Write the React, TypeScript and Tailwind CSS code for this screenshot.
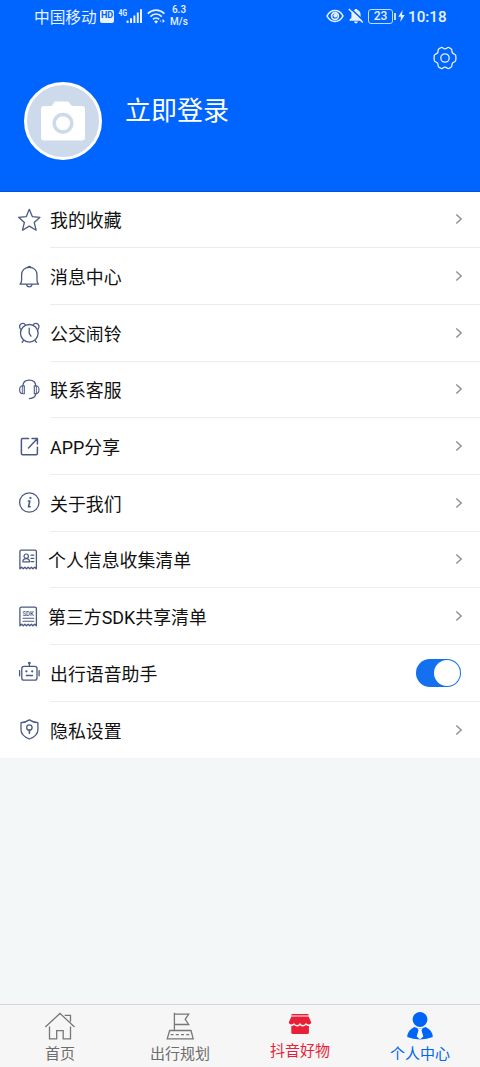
import type { ReactNode } from 'react';
import { useState } from 'react';

const INK = '#4a5a80';

interface IconProps {
  children: ReactNode;
}

function RowIcon({ children }: IconProps) {
  return (
    <svg
      width={24}
      height={24}
      viewBox="0 0 24 24"
      fill="none"
      stroke={INK}
      strokeWidth={1.3}
      strokeLinecap="round"
      strokeLinejoin="round"
      className="shrink-0"
    >
      {children}
    </svg>
  );
}

// Receipt outline with a torn bottom edge, shared by the two list entries.
const RECEIPT =
  'M2.9 20.8V3.6Q2.9 2.2 4.3 2.2H18Q19.4 2.2 19.4 3.6V20.8L17.7 19.2L15.9 20.8L14.4 19.2L12.8 20.8L11.2 19.2L9.5 20.8L7.9 19.2L6.2 20.8L4.6 19.2Z';

interface Row {
  label: string;
  icon: ReactNode;
  narrow?: boolean;
  toggle?: boolean;
}

const ROWS: Row[] = [
  {
    label: '我的收藏',
    icon: (
      <path d="M12.3 1.3L15.3 8.6L23 9.3L17.2 14.4L19.1 22.2L12.3 18.1L5.5 22.2L7.4 14.4L1.6 9.3L9.3 8.6Z" />
    ),
  },
  {
    label: '消息中心',
    icon: (
      <>
        <path d="M3 19.2C4.4 18.3 4.6 17 4.6 15V9.9C4.6 5.3 7.8 2.3 12.3 2.3S20 5.3 20 9.9V15C20 17 20.2 18.3 21.6 19.2Z" />
        <path d="M10.8 2.2Q12.3 .6 13.8 2.2M9.6 19.7Q10.2 21.8 12.3 21.8T15 19.7" />
      </>
    ),
  },
  {
    label: '公交闹铃',
    icon: (
      <>
        <circle cx={12.3} cy={12.3} r={8.8} />
        <path d="M12.2 7.2V12.4L14 15.2M3.4 8C1.8 6.2 2.5 2.5 5.6 2.3C7.2 2.2 8 3 8.4 4.1M21.2 8C22.8 6.2 22.1 2.5 19 2.3C17.4 2.2 16.6 3 16.2 4.1M6.4 19.6L5.2 21.4M18.2 19.6L19.4 21.4" />
      </>
    ),
  },
  {
    label: '联系客服',
    icon: (
      <>
        <path d="M5.8 8C6 4.4 8.5 2.2 12.3 2.2S18.6 4.4 18.8 8" />
        <path
          d="M7.3 7.8V15.8H6.2C4 15.8 2.6 14.1 2.6 11.8S4 7.8 6.2 7.8ZM17.3 7.8V15.8H18.4C20.6 15.8 22 14.1 22 11.8S20.6 7.8 18.4 7.8Z"
          strokeWidth={1.1}
        />
        <path d="M5.3 8.5V15.3M19.4 8.5V15.3" strokeWidth={0.9} />
        <path d="M18.8 15.8C18.4 18.6 16.3 20.3 12.4 20.6" />
      </>
    ),
  },
  {
    label: 'APP分享',
    icon: (
      <path
        d="M11.6 3.6H5.6Q4.4 3.6 4.4 4.8V18.6Q4.4 19.8 5.6 19.8H19.2Q20.4 19.8 20.4 18.6V12.2M15 3.6H20.4V9M20.2 3.8L11.5 13"
        strokeWidth={1.5}
      />
    ),
  },
  {
    label: '关于我们',
    icon: (
      <>
        <circle cx={12.3} cy={11.5} r={9.7} />
        <path d="M11.4 10H12.8L11.5 15.7H13.1" strokeWidth={1.6} />
        <circle cx={13.3} cy={7} r={0.7} fill={INK} strokeWidth={0.8} />
      </>
    ),
  },
  {
    label: '个人信息收集清单',
    narrow: true,
    icon: (
      <>
        <path d={RECEIPT} />
        <circle cx={9.2} cy={8.2} r={2.2} strokeWidth={1.2} />
        <path
          d="M5.8 13.8Q5.8 10.6 9.2 10.6T12.6 13.8ZM14 7.2H16.8M14 10.4H16.8M14 13.6H16.8"
          strokeWidth={1.2}
        />
      </>
    ),
  },
  {
    label: '第三方SDK共享清单',
    narrow: true,
    icon: (
      <>
        <path d={RECEIPT} />
        <path d="M6 13.3H16.8M6 16.2H16.8" strokeWidth={1.1} />
        <text
          x={11.2}
          y={10.6}
          textAnchor="middle"
          fontSize={7.6}
          fontWeight={500}
          fontFamily="Roboto, sans-serif"
          textLength={11.5}
          lengthAdjust="spacingAndGlyphs"
          fill={INK}
          stroke="none"
        >
          SDK
        </text>
      </>
    ),
  },
  {
    label: '出行语音助手',
    toggle: true,
    icon: (
      <>
        <rect x={4.8} y={5.4} width={15.2} height={13.8} rx={2.2} />
        <path d="M12.4 2.6V5.4M2.6 9.6V14.8M22.1 9.6V14.8M9.3 14.5H15.5" />
        <circle cx={12.4} cy={2} r={0.7} fill={INK} />
        <circle cx={9.4} cy={10.3} r={0.5} fill={INK} />
        <circle cx={15.2} cy={10.3} r={0.5} fill={INK} />
      </>
    ),
  },
  {
    label: '隐私设置',
    icon: (
      <>
        <path d="M12.4 1.9C10 3.6 7 4.5 4 4.7V12C4 16 7.4 19 12.4 21C17.4 19 20.9 16 20.9 12V4.7C17.8 4.5 14.8 3.6 12.4 1.9Z" />
        <circle cx={12.4} cy={9.5} r={2.7} />
        <path d="M12.4 12.2V15.2" strokeWidth={1.6} />
      </>
    ),
  },
];

function StatusBar() {
  return (
    <div className="flex h-8 items-center pr-[33px] pl-[34px] text-[#e9f1ff]">
      <span className="w-[64px] pt-[3px] text-[15.7px] leading-8 whitespace-nowrap">
        中国移动
      </span>
      <span className="ml-[2px] flex h-[13px] w-[14px] items-center justify-center rounded-[2px] bg-[#e9f1ff] font-[Roboto] text-[9px] font-bold text-[#0061ff]">
        HD
      </span>
      <svg width={25} height={16} viewBox="0 0 25 16" fill="#e9f1ff" className="ml-[4px]">
        <text
          x={0.5}
          y={7.6}
          fontSize={9}
          fontWeight={700}
          fontFamily="Roboto, sans-serif"
          textLength={8.5}
          lengthAdjust="spacingAndGlyphs"
        >
          4G
        </text>
        <path d="M8.6 12.6h2V15h-2zM12 10.3h2V15h-2zM15.4 7.4h2V15h-2zM18.8 4.6h2V15h-2zM22 1.2h2V15h-2z" />
      </svg>
      <svg
        width={19}
        height={16}
        viewBox="0 0 19 16"
        fill="none"
        stroke="#e9f1ff"
        strokeWidth={1.7}
        className="ml-[4px]"
      >
        <path d="M.8 5.6C5.8.9 12.4.9 17.4 5.6M3.4 8.6C6.8 5.3 11.4 5.3 14.8 8.6M6 11.4C7.8 9.5 10.4 9.5 12.2 11.4" />
        <path d="M7.1 13.2Q9.1 11.6 11.1 13.2L9.1 15.7Z" fill="#e9f1ff" stroke="none" />
        <path d="M15.6 11L17.9 13L15.6 15Z" fill="#e9f1ff" stroke="none" />
        <path d="M14.2 11.4L12.6 13L14.2 14.6Z" fill="#8fbaff" stroke="none" />
      </svg>
      <span className="ml-[3px] w-[20px] text-center font-[Roboto] text-[10px] leading-[12px] font-medium whitespace-nowrap">
        6.3
        <br />
        M/s
      </span>
      <svg
        width={18}
        height={14}
        viewBox="0 0 18 14"
        fill="none"
        stroke="#e9f1ff"
        strokeWidth={1.6}
        className="ml-auto"
      >
        <path d="M1 7C4.8-.3 13.2-.3 17 7C13.2 14.3 4.8 14.3 1 7Z" />
        <circle cx={9} cy={7} r={3.4} />
        <circle cx={9.4} cy={6.6} r={2} fill="#e9f1ff" stroke="none" />
      </svg>
      <svg width={16} height={16} viewBox="0 0 16 16" fill="#e9f1ff" className="ml-[4px]">
        <path d="M1.6 12.8V11.6L3.4 9.8V6.2C3.4 3.6 5 2.3 6.8 1.9V1H9.2V1.9C11.2 2.3 12.6 4 12.6 6.2V9.8L14.4 11.6V12.8ZM6 13.6H10Q9.8 15.4 8 15.4T6 13.6Z" />
        <path d="M2.2 .2L15.8 13" stroke="#0065ff" strokeWidth={1.6} />
        <path d="M.8 1L14.8 14.6" stroke="#e9f1ff" strokeWidth={1.4} />
      </svg>
      <div className="ml-[4px] flex h-[15px] w-[25px] items-center justify-center rounded-[3px] border border-[#c4dbff] font-[Roboto] text-[12px] font-medium">
        23
      </div>
      <span className="ml-[1px] h-[7px] w-[2px] bg-[#c4dbff]" />
      <svg width={7} height={12} viewBox="0 0 7 12" fill="#e9f1ff" className="ml-[2px]">
        <path d="M4.6 0L.3 6.8H3L2.3 12L6.7 5H4Z" />
      </svg>
      <span className="ml-[3px] w-[39px] pt-[2px] font-[Roboto] text-[15.2px] leading-8 font-medium whitespace-nowrap">
        10:18
      </span>
    </div>
  );
}

function Header() {
  return (
    <header className="h-[191.5px] border-b border-[#0052d8] bg-[#0065ff]">
      <StatusBar />
      <div className="flex justify-end pt-[14px] pr-[23px]">
        <svg
          width={24}
          height={24}
          viewBox="0 0 24 24"
          fill="none"
          stroke="#e9f1ff"
          strokeWidth={1.3}
          strokeLinejoin="round"
        >
          <path d="M8.2 1.5Q9.2 1.2 10 2Q12 3.6 14 2Q14.8 1.2 15.8 1.5L18.2 2.9Q19 3.5 18.9 4.6Q18.7 7.3 21.2 8Q22.4 8.4 22.7 9.4Q23.2 11.9 22.7 14.4Q22.4 15.5 21.2 16Q18.7 16.8 18.9 19.4Q19 20.5 18.2 21.1L15.8 22.5Q14.8 22.8 14 22Q12 20.4 10 22Q9.2 22.8 8.2 22.5L5.8 21.1Q5 20.5 5.1 19.4Q5.3 16.8 2.8 16Q1.6 15.5 1.3 14.4Q.8 11.9 1.3 9.4Q1.6 8.4 2.8 8Q5.3 7.3 5.1 4.6Q5 3.5 5.8 2.9Z" />
          <circle cx={12} cy={12} r={4.2} />
        </svg>
      </div>
      <div className="flex pt-[12px] pl-[24px]">
        <div className="flex size-[78px] items-center justify-center rounded-full border-[3px] border-white bg-[#cddaeb]">
          <svg width={44} height={40} viewBox="0 0 44 40">
            <path
              d="M3 5H9.5Q11 5 11.8 3.6L12.6 2Q13.4 .6 15 .6H26Q27.6 .6 28.6 2L29.6 3.6Q30.4 5 32 5H41Q44 5 44 8V36.5Q44 39.5 41 39.5H3Q0 39.5 0 36.5V8Q0 5 3 5Z"
              fill="#fff"
            />
            <circle cx={22} cy={22.3} r={8.8} fill="#fff" stroke="#cddaeb" strokeWidth={3.6} />
          </svg>
        </div>
        <h1 className="mt-[10px] ml-[23px] text-[26px] leading-[38px] text-white">
          立即登录
        </h1>
      </div>
    </header>
  );
}

function MenuRow({ row, last }: { row: Row; last: boolean }) {
  const [on, setOn] = useState(true);

  return (
    <li className="flex h-[56.7px] pl-[17px]">
      <div className="flex w-[33px] shrink-0 items-center">
        <RowIcon>{row.icon}</RowIcon>
      </div>
      <div
        className={`flex flex-1 items-center justify-between border-b pr-[17px] ${last ? 'border-transparent' : 'border-[#ededed]'}`}
      >
        <span
          className={`pt-[4px] text-[17.9px] leading-6 text-[#111] ${row.narrow ? '-ml-[2px]' : ''}`}
        >
          {row.label}
        </span>
        {row.toggle ? (
          <button
            type="button"
            role="switch"
            aria-checked={on}
            aria-label={row.label}
            onClick={() => setOn(!on)}
            className={`mr-[2px] flex h-[28px] w-[45px] items-center rounded-full px-[1px] ${on ? 'justify-end bg-[#1370ee]' : 'justify-start bg-gray-300'}`}
          >
            <span className="size-[26px] rounded-full bg-white" />
          </button>
        ) : (
          <svg
            width={8}
            height={12}
            viewBox="0 0 8 12"
            fill="none"
            stroke="#8f8f8f"
            strokeWidth={1.4}
          >
            <path d="M1.3 1.4L6.2 6L1.3 10.6" />
          </svg>
        )}
      </div>
    </li>
  );
}

function TabBar() {
  return (
    <nav className="grid h-[63px] grid-cols-4 border-t border-[#d4d6d8] bg-[#f6f6f6] text-[15px] leading-[20px] text-[#6d6d6d]">
      <div className="flex flex-col items-center pt-[6px]">
        <svg width={32} height={30} viewBox="0 0 32 30" fill="none" stroke="#777" strokeWidth={1.3}>
          <path d="M1.3 16L16 2.4L30.5 16M5.5 15.4V27.8H12.7V19.6H19.2V27.8H26.5V15.4M20.7 4.3H26.5V10.8" />
        </svg>
        <span className="mt-[3px]">首页</span>
      </div>
      <div className="flex flex-col items-center pt-[6px]">
        <svg width={32} height={30} viewBox="0 0 32 30" fill="none" stroke="#777" strokeWidth={1.3}>
          <path d="M10.4 1.7V19.5M10.4 3.2H24.7L21.2 8.3L24.7 13.5H10.4M5.7 19.5H27L29.2 27.8H3.2Z" />
          <path d="M6.6 23.6H26" strokeDasharray="3 2.2" />
        </svg>
        <span className="mt-[3px]">出行规划</span>
      </div>
      <div className="flex flex-col items-center pt-[8px] text-[#e91f38]">
        <svg width={24} height={22} viewBox="0 0 24 22" fill="currentColor">
          <path d="M3.5 .9H20.5V2.5H3.5ZM3.4 3.4H20.6L23.3 9.6Q22.6 11.6 20.7 11.5Q18.7 11.4 18 10Q17 12 15 12T12 10Q11 12 9 12T6 10Q5.3 11.4 3.3 11.5Q1.4 11.6.7 9.6Z" />
          <path d="M3.3 12.9Q5 13 6.1 12Q7.2 13.4 9 13.4T12 12.2Q13.2 13.4 15 13.4T17.9 12Q19 13 20.9 12.9V19.4Q20.9 21 19.3 21H4.9Q3.3 21 3.3 19.4Z" />
        </svg>
        <span className="mt-[6px]">抖音好物</span>
      </div>
      <div className="flex flex-col items-center pt-[6px] text-[#0065f5]">
        <svg width={28} height={30} viewBox="0 0 28 30" fill="currentColor">
          <circle cx={14} cy={8.5} r={7.4} />
          <path d="M8.3 16Q14 18.4 19.7 16Q26.8 19.5 26.8 26Q21 28.4 14 28.4T1.2 26Q1.2 19.5 8.3 16Z" />
          <path d="M11.3 16.9L14 17.6L16.7 16.9L15.5 19.3L17.3 25.5L14 28.4L10.7 25.5L12.5 19.3Z" fill="#f6f6f6" />
        </svg>
        <span className="mt-[3px]">个人中心</span>
      </div>
    </nav>
  );
}

export default function App() {
  return (
    <div className="flex h-[1067px] w-[480px] flex-col overflow-hidden bg-[#f3f7f8] font-[Roboto,'Noto_Sans_CJK_SC',sans-serif]">
      <Header />
      <ul className="bg-white">
        {ROWS.map((row, i) => (
          <MenuRow key={row.label} row={row} last={i === ROWS.length - 1} />
        ))}
      </ul>
      <div className="flex-1" />
      <TabBar />
    </div>
  );
}
